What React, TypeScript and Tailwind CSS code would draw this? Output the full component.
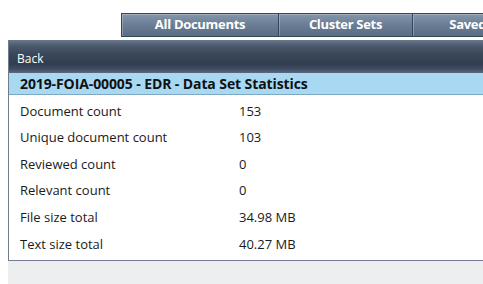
import React from 'react';

const tabs = [
  { label: 'All Documents', w: 'w-[158px]' },
  { label: 'Cluster Sets', w: 'w-[135px]' },
  { label: 'Saved Searches', w: 'w-[170px]' },
];

const stats = [
  { label: 'Document count', value: '153' },
  { label: 'Unique document count', value: '103' },
  { label: 'Reviewed count', value: '0' },
  { label: 'Relevant count', value: '0' },
  { label: 'File size total', value: '34.98 MB' },
  { label: 'Text size total', value: '40.27 MB' },
];

export default function App() {
  return (
    <div className="w-[483px] h-[284px] overflow-hidden bg-white font-['Open_Sans','Noto_Sans',sans-serif]">
      {/* Top tabs */}
      <div className="flex pl-[121px] pt-[13px] h-[40px] whitespace-nowrap">
        {tabs.map((t) => (
          <div
            key={t.label}
            className={`${t.w} shrink-0 h-[24px] flex items-center justify-center border border-[#34465a] -ml-px first:ml-0 bg-gradient-to-b from-[#8496aa] via-[#6a7d94] to-[#586c84] shadow-[inset_1px_1px_0_rgba(255,255,255,0.25)] text-white text-[13px] font-bold tracking-[-0.3px]`}
          >
            {t.label}
          </div>
        ))}
      </div>

      {/* Panel */}
      <div className="ml-[8px] w-[520px] border-l border-b border-[#6f7d8e]">
        <div className="h-[33px] flex items-center pl-[8px] pt-[4px] bg-[linear-gradient(to_bottom,#6a798c_0px,#4a596d_6px,#3a475a_14px,#323e50_24px,#3f4d62_29px,#5a6a80_33px)] text-white text-[12px]">
          Back
        </div>
        <div className="h-[22px] flex items-center pl-[11px] bg-[#a8d8f2] border-b border-[#7fa9c3] text-[#111] text-[14px] font-bold tracking-[-0.1px]">
          2019-FOIA-00005 - EDR - Data Set Statistics
        </div>
        <div className="pt-[3px] pb-[2px] text-[#1a1a1a] text-[13px]">
          {stats.map((s) => (
            <div key={s.label} className="h-[26.6px] flex items-center pl-[11px]">
              <span className="w-[219px]">{s.label}</span>
              <span>{s.value}</span>
            </div>
          ))}
        </div>
      </div>
      <div className="ml-[8px] h-[30px] bg-[#eceeef]" />
    </div>
  );
}
